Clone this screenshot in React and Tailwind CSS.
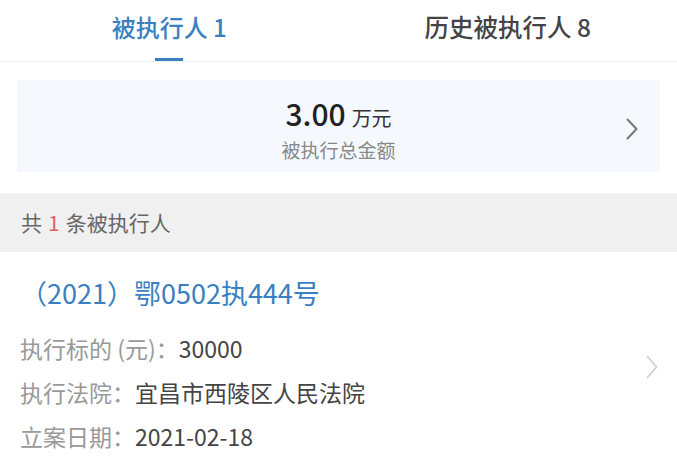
import React from "react";

function Chevron({ className, color, w = 12, h = 22, sw = 2 }) {
  return (
    <svg width={w} height={h} viewBox={`0 0 ${w} ${h}`} className={className} fill="none">
      <path d={`M1.5 1.5 L${w - 1.5} ${h / 2} L1.5 ${h - 1.5}`} stroke={color} strokeWidth={sw} strokeLinecap="round" strokeLinejoin="round" />
    </svg>
  );
}

export default function App() {
  return (
    <div
      className="w-[677px] h-[466px] overflow-hidden bg-white"
      style={{ fontFamily: '"Noto Sans CJK SC", "Noto Sans", sans-serif' }}
    >
      {/* Tabs */}
      <div className="flex h-[62px] border-b border-[#f0f0f0]">
        <div className="flex-1 flex flex-col items-center">
          <div className="pt-[11px] leading-[32px] text-[24px] font-medium text-[#3a7fc1]">被执行人 1</div>
          <div className="mt-[15px] h-[3px] w-[28px] bg-[#3a7fc1]" />
        </div>
        <div className="flex-1 flex flex-col items-center">
          <div className="pt-[11px] leading-[32px] text-[24.5px] font-medium text-[#444]">历史被执行人 8</div>
        </div>
      </div>

      {/* Summary card */}
      <div className="mx-[17px] mt-[18px] h-[92px] bg-[#f5f9fe] flex items-start">
        <div className="flex-1 flex flex-col items-center">
          <div className="pt-[15px] h-[51px] flex items-baseline leading-[36px]">
            <span className="text-[30px] font-medium text-[#222]">3.00</span>
            <span className="ml-[6px] text-[20px] text-[#333]">万元</span>
          </div>
          <div className="mt-[6px] leading-[26px] text-[19px] text-[#888]">被执行总金额</div>
        </div>
      </div>
      <div className="relative">
        <div className="absolute right-[39px] top-[-54px]">
          <Chevron color="#777" w={12} h={22} sw={2} />
        </div>
      </div>

      {/* Count band */}
      <div className="mt-[21px] h-[59px] bg-[#f0f0f0] flex items-center pl-[21px] text-[21px] text-[#666]">
        <span>共</span>
        <span className="mx-[6px] text-[#e0606b]">1</span>
        <span>条被执行人</span>
      </div>

      {/* Item */}
      <div className="flex items-start pl-[20px] pr-[19px]">
        <div className="flex-1">
          <div className="pt-[23px] leading-[36px] text-[27px] text-[#3a7fc1]">（2021）鄂0502执444号</div>
          <div className="mt-[15px] text-[23px]">
            <div className="leading-[44px] flex">
              <span className="text-[#999]">执行标的 (元)：</span>
              <span className="text-[#444]">30000</span>
            </div>
            <div className="leading-[44px] flex">
              <span className="text-[#999]">执行法院：</span>
              <span className="text-[#444]">宜昌市西陵区人民法院</span>
            </div>
            <div className="leading-[44px] flex">
              <span className="text-[#999]">立案日期：</span>
              <span className="text-[#444]">2021-02-18</span>
            </div>
          </div>
        </div>
        <div className="mt-[103px]">
          <Chevron color="#cfcfcf" w={12} h={24} sw={1.6} />
        </div>
      </div>
    </div>
  );
}
